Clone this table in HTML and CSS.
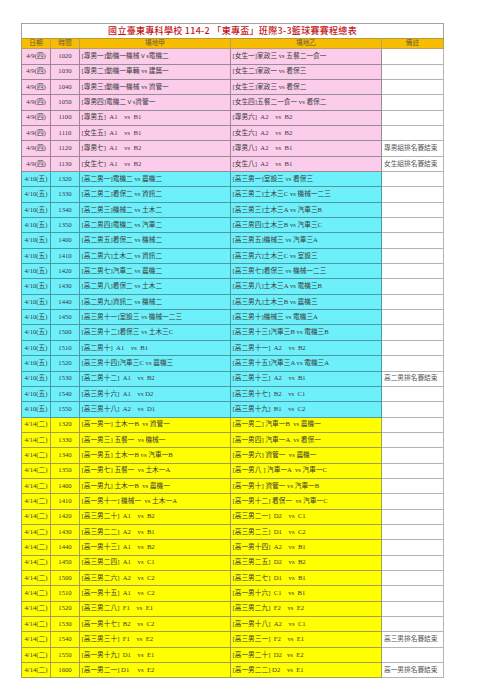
FILE: index.html
```html
<!DOCTYPE html>
<html lang="zh-Hant">
<head>
<meta charset="utf-8">
<title>賽程總表</title>
<link rel="stylesheet" href="styles.css">
</head>
<body>
<div class="page">
<table class="sched">
<colgroup><col class="c-date"><col class="c-time"><col class="c-a"><col class="c-b"><col class="c-note"></colgroup>
<thead>
<tr class="title-row"><th colspan="5">國立臺東專科學校 114-2 「東專盃」班際3-3籃球賽賽程總表</th></tr>
<tr class="head-row"><th>日期</th><th>時間</th><th>場地甲</th><th>場地乙</th><th>備註</th></tr>
</thead>
<tbody>
<tr class="pink"><td class="d">4/9(四)</td><td class="t">1020</td><td class="m">[專男一]動機一機械ｖs電機二</td><td class="m">[女生一]家政三 vs 五餐二一食一</td><td class="n"></td></tr>
<tr class="pink"><td class="d">4/9(四)</td><td class="t">1030</td><td class="m">[專男二]動機一車輛 vs 建築一</td><td class="m">[女生二]家政一 vs 看保三</td><td class="n"></td></tr>
<tr class="pink"><td class="d">4/9(四)</td><td class="t">1040</td><td class="m">[專男三]動機一機械 vs 資管一</td><td class="m">[女生三]家政三 vs 看保二</td><td class="n"></td></tr>
<tr class="pink"><td class="d">4/9(四)</td><td class="t">1050</td><td class="m">[專男四]電機二ｖs資管一</td><td class="m">[女生四]五餐二一食一 vs 看保二</td><td class="n"></td></tr>
<tr class="pink"><td class="d">4/9(四)</td><td class="t">1100</td><td class="m">[專男五]  A1    vs  B1</td><td class="m">[專男六]  A2    vs  B2</td><td class="n"></td></tr>
<tr class="pink"><td class="d">4/9(四)</td><td class="t">1110</td><td class="m">[女生五]  A1    vs  B1</td><td class="m">[女生六]  A2    vs  B2</td><td class="n"></td></tr>
<tr class="pink"><td class="d">4/9(四)</td><td class="t">1120</td><td class="m">[專男七]  A1    vs  B2</td><td class="m">[專男八]  A2    vs  B1</td><td class="n">專男組排名賽結束</td></tr>
<tr class="pink"><td class="d">4/9(四)</td><td class="t">1130</td><td class="m">[女生七]  A1    vs  B2</td><td class="m">[女生八]  A2    vs  B1</td><td class="n">女生組排名賽結束</td></tr>

<tr class="cyan"><td class="d">4/10(五)</td><td class="t">1320</td><td class="m">[高二男一]電機二 vs 農機二</td><td class="m">[高三男一]室設三 vs 看保三</td><td class="n"></td></tr>
<tr class="cyan"><td class="d">4/10(五)</td><td class="t">1330</td><td class="m">[高二男二]看保二 vs 資訊二</td><td class="m">[高三男二]土木三C vs 機械一二三</td><td class="n"></td></tr>
<tr class="cyan"><td class="d">4/10(五)</td><td class="t">1340</td><td class="m">[高二男三]機械二 vs 土木二</td><td class="m">[高三男三]土木三A vs 汽車三B</td><td class="n"></td></tr>
<tr class="cyan"><td class="d">4/10(五)</td><td class="t">1350</td><td class="m">[高二男四]電機二 vs 汽車二</td><td class="m">[高三男四]土木三B vs 汽車三C</td><td class="n"></td></tr>
<tr class="cyan"><td class="d">4/10(五)</td><td class="t">1400</td><td class="m">[高二男五]看保二 vs 機械二</td><td class="m">[高三男五]機械三 vs 汽車三A</td><td class="n"></td></tr>
<tr class="cyan"><td class="d">4/10(五)</td><td class="t">1410</td><td class="m">[高二男六]土木二 vs 資訊二</td><td class="m">[高三男六]土木三C vs 室設三</td><td class="n"></td></tr>
<tr class="cyan"><td class="d">4/10(五)</td><td class="t">1420</td><td class="m">[高二男七]汽車二 vs 農機二</td><td class="m">[高三男七]看保三 vs 機械一二三</td><td class="n"></td></tr>
<tr class="cyan"><td class="d">4/10(五)</td><td class="t">1430</td><td class="m">[高二男八]看保二 vs 土木二</td><td class="m">[高三男八]土木三A vs 電機三B</td><td class="n"></td></tr>
<tr class="cyan"><td class="d">4/10(五)</td><td class="t">1440</td><td class="m">[高二男九]資訊二 vs 機械二</td><td class="m">[高三男九]土木三B vs 農機三</td><td class="n"></td></tr>
<tr class="cyan"><td class="d">4/10(五)</td><td class="t">1450</td><td class="m">[高三男十一]室設三 vs 機械一二三</td><td class="m">[高三男十]機械三 vs 電機三A</td><td class="n"></td></tr>
<tr class="cyan"><td class="d">4/10(五)</td><td class="t">1500</td><td class="m">[高三男十二]看保三 vs 土木三C</td><td class="m">[高三男十三]汽車三B vs 電機三B</td><td class="n"></td></tr>
<tr class="cyan"><td class="d">4/10(五)</td><td class="t">1510</td><td class="m">[高二男十]  A1    vs  B1</td><td class="m">[高二男十一]  A2    vs  B2</td><td class="n"></td></tr>
<tr class="cyan"><td class="d">4/10(五)</td><td class="t">1520</td><td class="m">[高三男十四]汽車三C vs 農機三</td><td class="m">[高三男十五]汽車三A vs 電機三A</td><td class="n"></td></tr>
<tr class="cyan"><td class="d">4/10(五)</td><td class="t">1530</td><td class="m">[高二男十二]  A1    vs  B2</td><td class="m">[高二男十三]  A2    vs  B1</td><td class="n">高二男排名賽結束</td></tr>
<tr class="cyan"><td class="d">4/10(五)</td><td class="t">1540</td><td class="m">[高三男十六]  A1    vs D2</td><td class="m">[高三男十七]  B2    vs  C1</td><td class="n"></td></tr>
<tr class="cyan"><td class="d">4/10(五)</td><td class="t">1550</td><td class="m">[高三男十八]  A2    vs  D1</td><td class="m">[高三男十九]  B1    vs  C2</td><td class="n"></td></tr>

<tr class="yellow"><td class="d">4/14(二)</td><td class="t">1320</td><td class="m">[高一男一] 土木一B  vs 資管一</td><td class="m">[高一男二] 汽車一B  vs 農機一</td><td class="n"></td></tr>
<tr class="yellow"><td class="d">4/14(二)</td><td class="t">1330</td><td class="m">[高一男三] 五餐一  vs 機械一</td><td class="m">[高一男四] 汽車一A  vs 看保一</td><td class="n"></td></tr>
<tr class="yellow"><td class="d">4/14(二)</td><td class="t">1340</td><td class="m">[高一男五] 土木一B vs 汽車一B</td><td class="m">[高一男六] 資管一  vs 農機一</td><td class="n"></td></tr>
<tr class="yellow"><td class="d">4/14(二)</td><td class="t">1350</td><td class="m">[高一男七] 五餐一  vs 土木一A</td><td class="m">[高一男八 ] 汽車一A  vs 汽車一C</td><td class="n"></td></tr>
<tr class="yellow"><td class="d">4/14(二)</td><td class="t">1400</td><td class="m">[高一男九] 土木一B  vs 農機一</td><td class="m">[高一男十] 資管一 vs 汽車一B</td><td class="n"></td></tr>
<tr class="yellow"><td class="d">4/14(二)</td><td class="t">1410</td><td class="m">[高一男十一] 機械一  vs 土木一A</td><td class="m">[高一男十二] 看保一  vs 汽車一C</td><td class="n"></td></tr>
<tr class="yellow"><td class="d">4/14(二)</td><td class="t">1420</td><td class="m">[高三男二十]  A1    vs  B2</td><td class="m">[高三男二一]  D2    vs  C1</td><td class="n"></td></tr>
<tr class="yellow"><td class="d">4/14(二)</td><td class="t">1430</td><td class="m">[高三男二二]  A2    vs  B1</td><td class="m">[高三男二三]  D1    vs  C2</td><td class="n"></td></tr>
<tr class="yellow"><td class="d">4/14(二)</td><td class="t">1440</td><td class="m">[高一男十三]  A1    vs  B2</td><td class="m">[高一男十四]  A2    vs  B1</td><td class="n"></td></tr>
<tr class="yellow"><td class="d">4/14(二)</td><td class="t">1450</td><td class="m">[高三男二四]  A1    vs  C1</td><td class="m">[高三男二五]  D2    vs  B2</td><td class="n"></td></tr>
<tr class="yellow"><td class="d">4/14(二)</td><td class="t">1500</td><td class="m">[高三男二六]  A2    vs  C2</td><td class="m">[高三男二七]  D1    vs  B1</td><td class="n"></td></tr>
<tr class="yellow"><td class="d">4/14(二)</td><td class="t">1510</td><td class="m">[高一男十五]  A1    vs  C2</td><td class="m">[高一男十六]  C1    vs  B1</td><td class="n"></td></tr>
<tr class="yellow"><td class="d">4/14(二)</td><td class="t">1520</td><td class="m">[高三男二八]  F1    vs  E1</td><td class="m">[高三男二九]  F2    vs  E2</td><td class="n"></td></tr>
<tr class="yellow"><td class="d">4/14(二)</td><td class="t">1530</td><td class="m">[高一男十七]  B2    vs  C2</td><td class="m">[高一男十八]  A2    vs  C1</td><td class="n"></td></tr>
<tr class="yellow"><td class="d">4/14(二)</td><td class="t">1540</td><td class="m">[高三男三十]  F1    vs  E2</td><td class="m">[高三男三一]  F2    vs  E1</td><td class="n">高三男排名賽結束</td></tr>
<tr class="yellow"><td class="d">4/14(二)</td><td class="t">1550</td><td class="m">[高一男十九]  D1    vs  E1</td><td class="m">[高一男二十]  D2   vs  E2</td><td class="n"></td></tr>
<tr class="yellow"><td class="d">4/14(二)</td><td class="t">1600</td><td class="m">[高一男二一] D1     vs  E2</td><td class="m">[高一男二二] D2    vs  E1</td><td class="n">高一男排名賽結束</td></tr>
</tbody>
</table>
</div>
</body>
</html>
```

FILE: styles.css
```css
html, body {
  margin: 0;
  padding: 0;
  background: #ffffff;
}

.page {
  padding: 23px 0 0 21px;
}

.sched {
  width: 422px;
  table-layout: fixed;
  border-collapse: collapse;
  font-family: "Liberation Serif", "Noto Sans CJK TC", serif;
  font-size: 6.7px;
  color: #3a3a3a;
}

.c-date { width: 29px; }
.c-time { width: 29px; }
.c-a { width: 151px; }
.c-b { width: 151px; }
.c-note { width: 62px; }

.sched th,
.sched td {
  border: 1px solid #a3a3a3;
  padding: 0;
  line-height: 1;
  overflow: hidden;
  white-space: pre;
  vertical-align: middle;
}

.title-row th {
  height: 13.6px;
  background: #ffffff;
  color: #c41818;
  font-family: "Noto Sans CJK TC", serif;
  font-size: 9px;
  font-weight: 500;
  letter-spacing: 0.3px;
  text-align: center;
  border-bottom-color: #b59a3c;
}

.head-row th {
  height: 9.7px;
  background: #f7bd00;
  color: #6a5a3a;
  font-weight: normal;
  text-align: center;
  border-color: #b8a060;
}

.sched tbody tr {
  height: 15.35px;
}

.d, .t {
  text-align: center;
}

.m {
  text-align: left;
  padding-left: 1.5px !important;
}

.sched .pink .n,
.sched .cyan .n,
.sched .yellow .n {
  text-align: left;
  padding-left: 2px;
  background: #ffffff;
  color: #555555;
  border-color: #b4b4b4;
}

.pink .d, .pink .t, .pink .m {
  background: #fbcdea;
  border-color: #9a8a94;
}

.cyan .d, .cyan .t, .cyan .m {
  background: #6ef0fb;
  border-color: #4c9aa4;
}

.yellow .d, .yellow .t, .yellow .m {
  background: #ffff00;
  border-color: #a0a050;
}
```
